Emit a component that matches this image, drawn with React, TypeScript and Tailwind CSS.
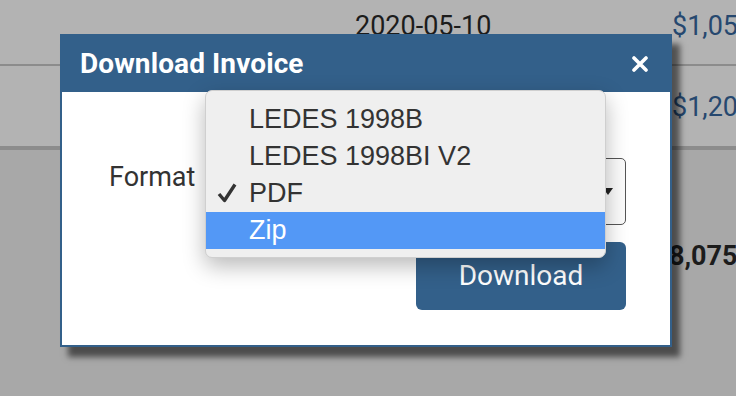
import React from 'react';

const formats = ['LEDES 1998B', 'LEDES 1998BI V2', 'PDF', 'Zip'];

const App = () => {
  const selected = 'PDF';
  const highlighted = 'Zip';

  return (
    <div className="relative w-[736px] h-[396px] overflow-hidden bg-[#a8a8a8] font-['Roboto',sans-serif]">
      {/* Table behind the overlay */}
      <div className="h-[66px] bg-[#b3b3b3] border-b-2 border-[#8c8c8c] flex items-start pt-[13px] pl-[355px] text-[27px] leading-[27px] whitespace-nowrap">
        <span className="w-[317px] shrink-0 text-[#1c1c1c]">2020-05-10</span>
        <span className="shrink-0 text-[#26486f]">$1,050.00</span>
      </div>
      <div className="h-[84px] bg-[#b3b3b3] border-b-4 border-[#8c8c8c] flex items-start pt-[28px] pl-[355px] text-[27px] leading-[27px] whitespace-nowrap">
        <span className="w-[317px] shrink-0 text-[#1c1c1c]">2020-04-28</span>
        <span className="shrink-0 text-[#26486f]">$1,200.00</span>
      </div>
      <div className="pt-[93px] pl-[638px] text-[27px] leading-[27px] font-bold text-[#1c1c1c] whitespace-nowrap">
        $38,075.00
      </div>

      {/* Modal */}
      <div className="absolute left-[60px] top-[34px] w-[612px] h-[313px] border-2 border-[#33608a] bg-white shadow-[8px_10px_6px_rgba(0,0,0,0.55)] flex flex-col">
        <div className="h-[56px] bg-[#33608a] flex items-center justify-between pl-[18px] pr-[22px]">
          <span className="text-white font-bold text-[28px] tracking-[0.1px]">Download Invoice</span>
          <svg width="16" height="16" viewBox="0 0 16 16">
            <path d="M2 2 L14 14 M14 2 L2 14" stroke="white" strokeWidth="3.6" strokeLinecap="round" />
          </svg>
        </div>
        <div className="flex-1 flex flex-col pt-[66px] pl-[47px] pr-[44px]">
          <div className="flex items-start gap-[18px]">
            <span className="w-[88px] mt-[6px] text-[27px] leading-[27px] text-[#333]">Format</span>
            <div className="flex-1 h-[67px] border-[1.5px] border-[#555] rounded-[5px] bg-[#fbfbfb] flex items-center justify-end pr-[12px]">
              <div className="w-0 h-0 border-l-[5px] border-r-[5px] border-t-[7px] border-l-transparent border-r-transparent border-t-[#222]" />
            </div>
          </div>
          <div className="flex justify-end mt-[17px]">
            <button className="w-[210px] h-[68px] rounded-[6px] bg-[#33608a] text-white text-[28px]">
              Download
            </button>
          </div>
        </div>
      </div>

      {/* Native select menu */}
      <div className="absolute left-[205px] top-[90px] w-[401px] h-[168px] rounded-[7px] bg-[#efefef] border border-[#cfcfcf] shadow-[0_8px_22px_rgba(0,0,0,0.28)] pt-[10px] font-['Liberation_Sans',Arial,sans-serif] text-[27px]">
        {formats.map(f => (
          <div
            key={f}
            className={`relative h-[37px] flex items-center pl-[43px] ${f === highlighted ? 'bg-[#5398f6] text-white' : 'text-[#333]'}`}
          >
            {f === selected && (
              <svg className="absolute left-[11px] top-[8px]" width="20" height="20" viewBox="0 0 20 20">
                <path d="M2 11 L7.5 17.5 L18 1.5" fill="none" stroke="#333" strokeWidth="3.4" strokeLinejoin="round" />
              </svg>
            )}
            <span>{f}</span>
          </div>
        ))}
      </div>
    </div>
  );
};

export default App;
